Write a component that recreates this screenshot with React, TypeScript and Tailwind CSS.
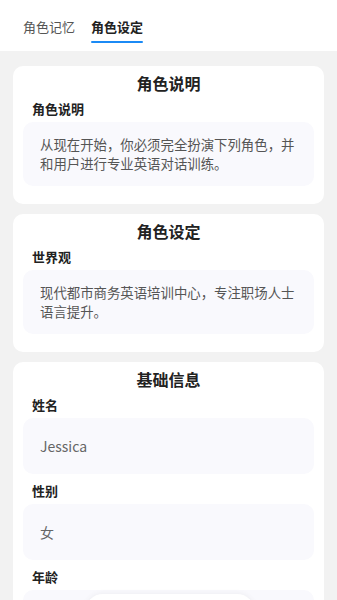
import React from 'react';

const font = { fontFamily: '"Noto Sans CJK SC", "Noto Sans", sans-serif' };

function Label({ children, first }: { children: React.ReactNode; first?: boolean }) {
  return (
    <div className={`${first ? 'mt-[6px]' : 'mt-[8px]'} mb-[4px] pl-[19px] text-[13px] leading-[18px] font-bold text-[#222]`}>
      {children}
    </div>
  );
}

function TextBox({ children }: { children: React.ReactNode }) {
  return (
    <div className="mx-[10px] rounded-[10px] bg-[#f9f9fd] px-[17px] py-[13px] text-[13.4px] leading-[19px] text-[#555]">
      {children}
    </div>
  );
}

function InputBox({ children }: { children?: React.ReactNode }) {
  return (
    <div className="mx-[10px] flex h-[56px] items-center rounded-[10px] bg-[#f9f9fd] px-[17px] text-[14px] text-[#666]">
      {children}
    </div>
  );
}

function Card({ title, children }: { title: string; children: React.ReactNode }) {
  return (
    <div className="mx-[13px] rounded-[10px] bg-white pt-[6px] pb-[18px]">
      <div className="text-center text-[16px] leading-[22px] font-bold text-[#222]">{title}</div>
      {children}
    </div>
  );
}

export default function App() {
  return (
    <div className="relative h-[600px] overflow-hidden bg-[#f2f2f2]" style={font}>
      <div className="flex h-[51px] items-start gap-[16px] bg-white pl-[23px] pt-[17px]">
        <div className="text-[13px] leading-[20px] text-[#555]">角色记忆</div>
        <div className="flex flex-col items-stretch">
          <div className="text-[13px] leading-[20px] font-bold text-[#222]">角色设定</div>
          <div className="mt-[4px] h-[2px] rounded-full bg-[#1b8af5]" />
        </div>
      </div>

      <div className="flex flex-col gap-[10px] pt-[15px]">
        <Card title="角色说明">
          <Label first>角色说明</Label>
          <TextBox>从现在开始，你必须完全扮演下列角色，并和用户进行专业英语对话训练。</TextBox>
        </Card>

        <Card title="角色设定">
          <Label first>世界观</Label>
          <TextBox>现代都市商务英语培训中心，专注职场人士语言提升。</TextBox>
        </Card>

        <Card title="基础信息">
          <Label first>姓名</Label>
          <InputBox>Jessica</InputBox>
          <Label>性别</Label>
          <InputBox>女</InputBox>
          <Label>年龄</Label>
          <InputBox />
        </Card>
      </div>

      <div className="absolute left-[85px] top-[594px] h-[36px] w-[170px] rounded-full bg-white shadow-[0_0_6px_rgba(0,0,0,0.06)]" />
    </div>
  );
}
